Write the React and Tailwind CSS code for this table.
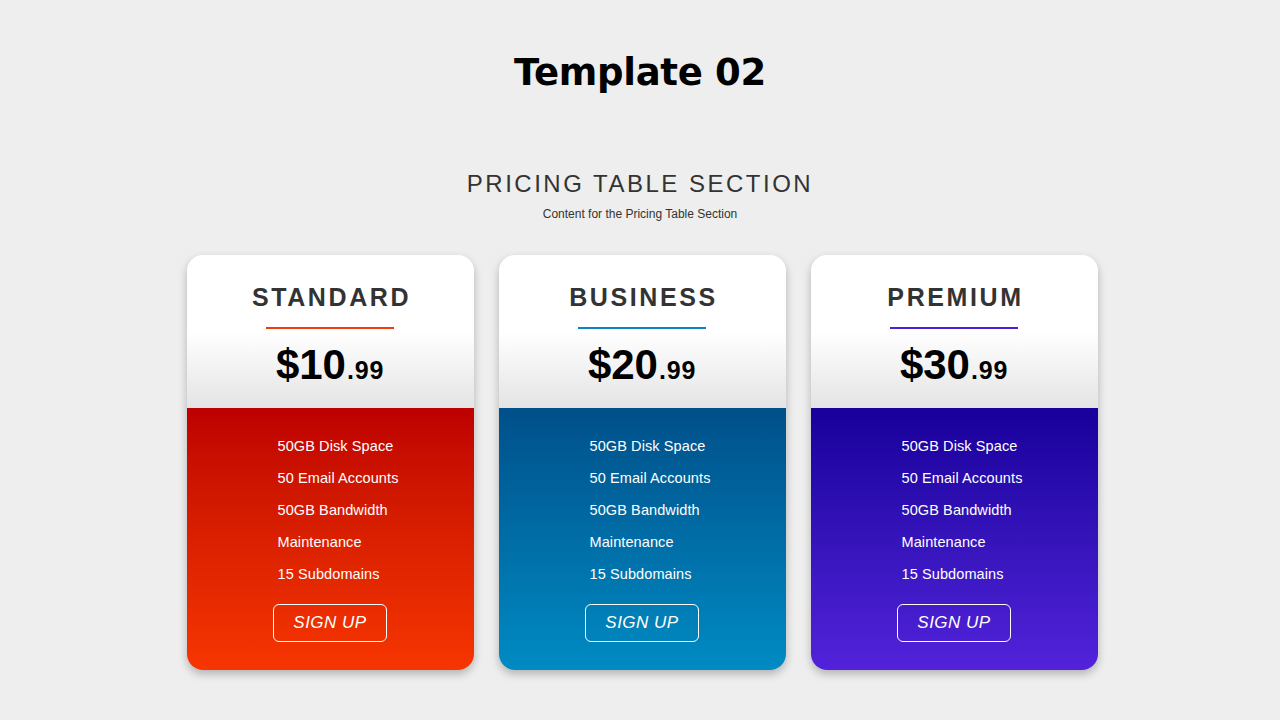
import React from "react";

const planes = [
  {
    nombre: "STANDARD",
    precio: "10",
    linea: "bg-[#f23a0c]",
    cuerpo: "bg-gradient-to-b from-[#bd0000] to-[#f73500]",
  },
  {
    nombre: "BUSINESS",
    precio: "20",
    linea: "bg-[#0a84c4]",
    cuerpo: "bg-gradient-to-b from-[#00508a] to-[#008bc3]",
  },
  {
    nombre: "PREMIUM",
    precio: "30",
    linea: "bg-[#4a1fd6]",
    cuerpo: "bg-gradient-to-b from-[#18009b] to-[#5222da]",
  },
];

const caracteristicas = [
  "50GB Disk Space",
  "50 Email Accounts",
  "50GB Bandwidth",
  "Maintenance",
  "15 Subdomains",
];

function Tarjeta({ plan }) {
  return (
    <div className="w-[287px] h-[415px] rounded-[16px] overflow-hidden shadow-[0_4px_8px_rgba(0,0,0,0.25)] flex flex-col">
      <div className="h-[153px] bg-[linear-gradient(to_bottom,#ffffff_0%,#ffffff_50%,#e4e4e4_100%)] flex flex-col items-center pt-[28px]">
        <h3 className="text-[25px] leading-[28px] font-bold tracking-[2.6px] text-[#333] pl-[3px]">
          {plan.nombre}
        </h3>
        <div className={`w-[128px] h-[2px] mt-[16px] ${plan.linea}`} />
        <div className="mt-[12px] flex items-baseline text-black">
          <span className="text-[42px] leading-[48px] font-bold">${plan.precio}</span>
          <span className="text-[25px] leading-[28px] font-bold tracking-[0.8px] pl-[1px]">.99</span>
        </div>
      </div>
      <div className={`flex-1 flex flex-col pt-[22px] ${plan.cuerpo}`}>
        <ul className="pl-[91px] text-white text-[14.5px] tracking-[0.1px]">
          {caracteristicas.map((c) => (
            <li key={c} className="h-[32px] leading-[32px]">
              {c}
            </li>
          ))}
        </ul>
        <div className="flex justify-center mt-[14px]">
          <button className="w-[114px] h-[38px] rounded-[6px] border-[1.5px] border-white text-white italic text-[17px] tracking-[0.5px]">
            SIGN UP
          </button>
        </div>
      </div>
    </div>
  );
}

export default function App() {
  return (
    <div className="min-h-screen w-full bg-[#eeeeee] flex flex-col items-center font-['Liberation_Sans',Arial,sans-serif]">
      <h1 className="mt-[50px] text-[37px] leading-[46px] font-bold text-black tracking-[-0.3px] font-['DejaVu_Sans',Verdana,sans-serif]">
        Template 02
      </h1>
      <h2 className="mt-[74px] text-[24px] leading-[28px] tracking-[2.5px] text-[#333]">
        PRICING TABLE SECTION
      </h2>
      <p className="mt-[9px] text-[12px] leading-[14px] text-[#333]">
        Content for the Pricing Table Section
      </p>
      <div className="mt-[34px] ml-[4px] flex gap-[25px]">
        {planes.map((p) => (
          <Tarjeta key={p.nombre} plan={p} />
        ))}
      </div>
    </div>
  );
}
